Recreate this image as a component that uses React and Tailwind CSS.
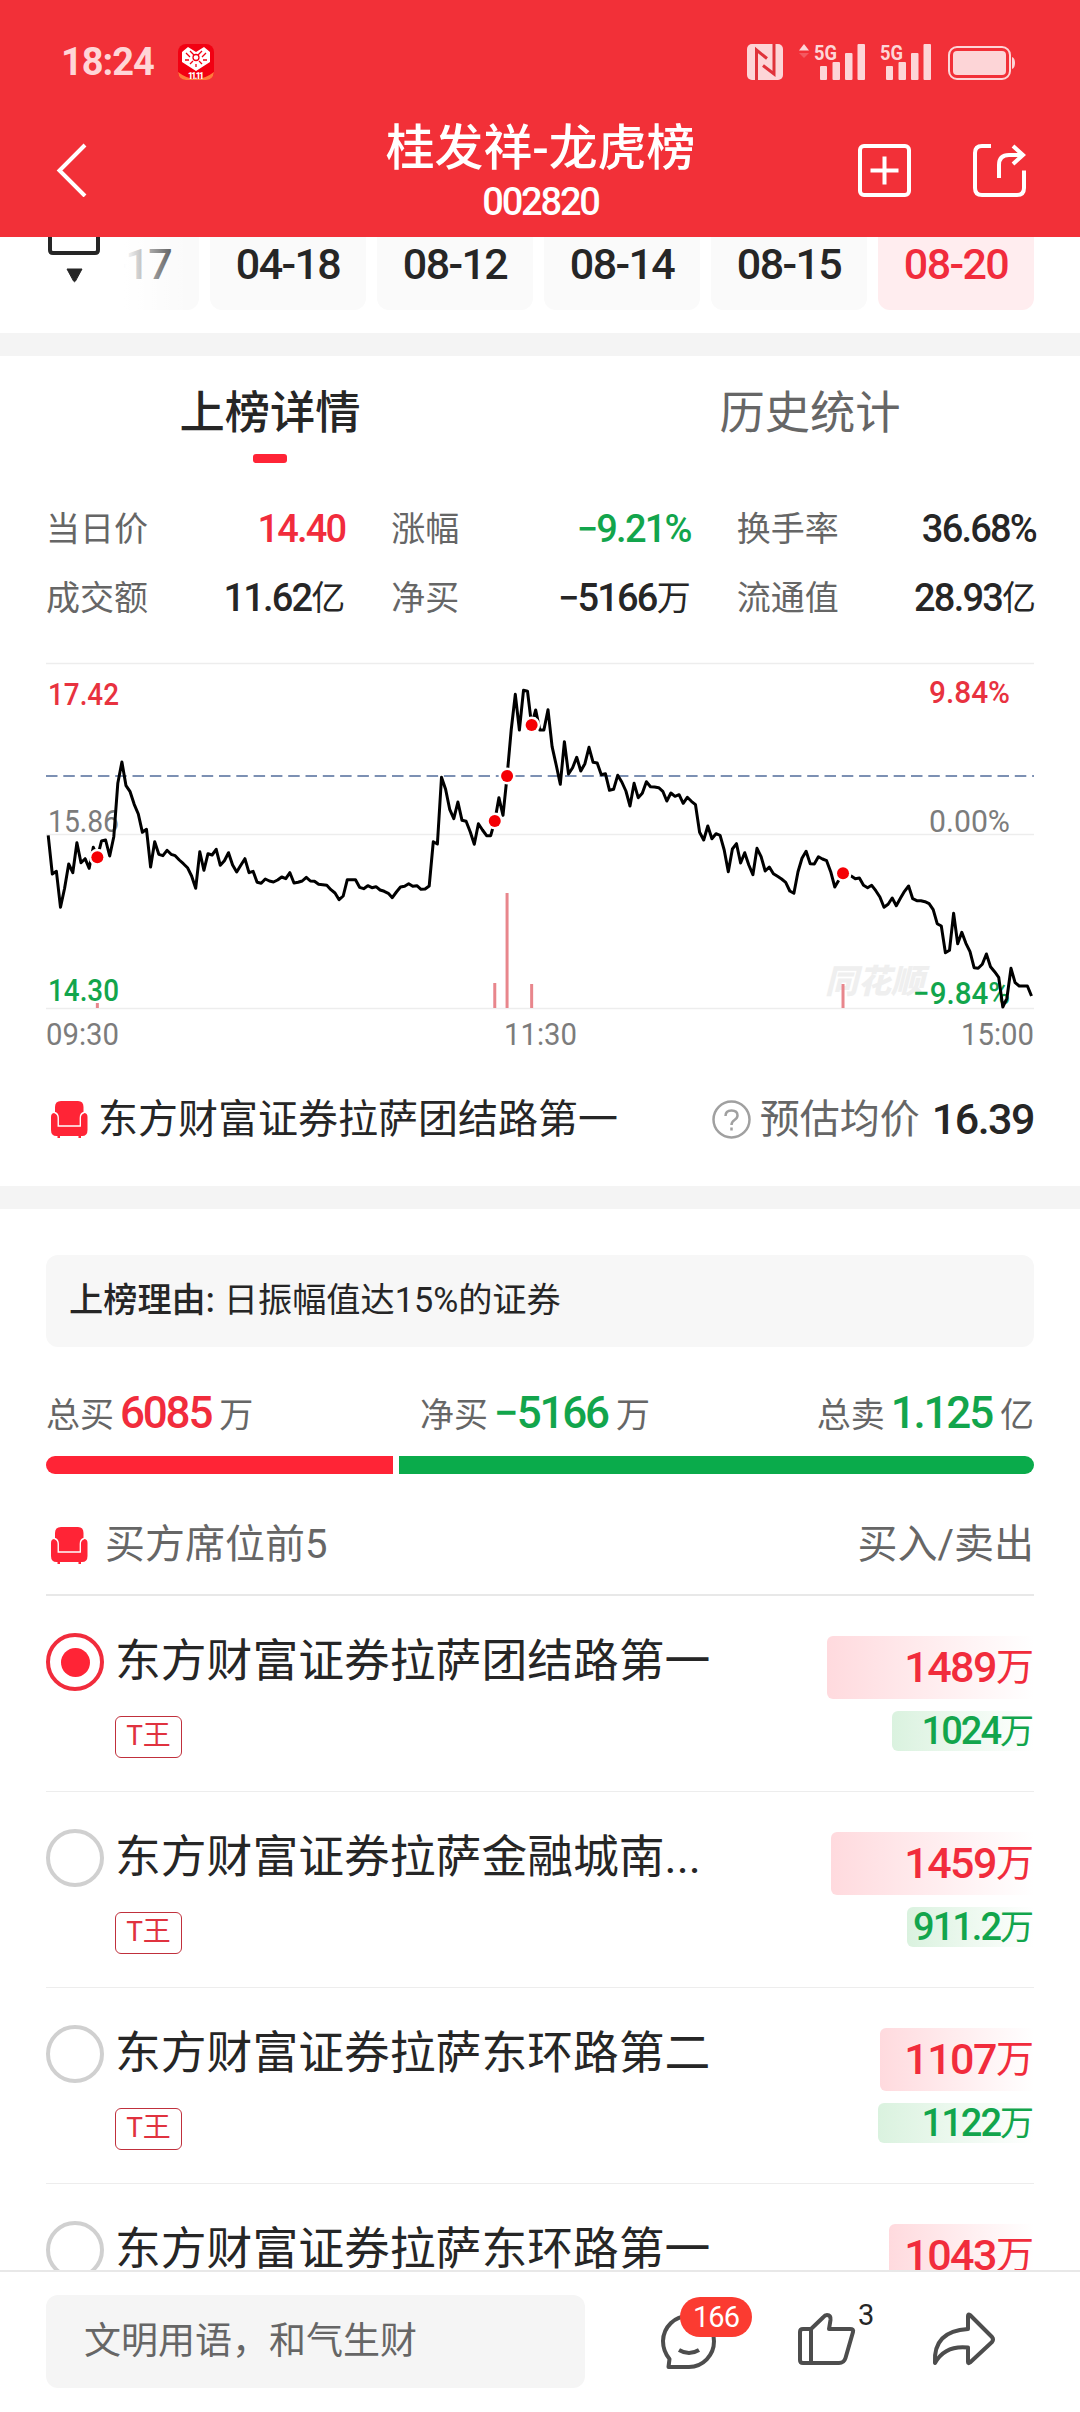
import React from 'react';

const DATES = ['04-18', '08-12', '08-14', '08-15', '08-20'];

const STATS = [
    { label: '当日价', value: '14.40', color: 'text-[#f12c3c]' },
    { label: '涨幅', value: '−9.21%', color: 'text-[#12a54c]' },
    { label: '换手率', value: '36.68%', color: 'text-[#262626]' },
    { label: '成交额', value: '11.62', unit: '亿', color: 'text-[#262626]' },
    { label: '净买', value: '−5166', unit: '万', color: 'text-[#262626]' },
    { label: '流通值', value: '28.93', unit: '亿', color: 'text-[#262626]' },
];

const SEATS = [
    { name: '东方财富证券拉萨团结路第一', buy: '1489', sell: '1024', buyWidth: 207, sellWidth: 142, selected: true },
    { name: '东方财富证券拉萨金融城南...', buy: '1459', sell: '911.2', buyWidth: 203, sellWidth: 127 },
    { name: '东方财富证券拉萨东环路第二', buy: '1107', sell: '1122', buyWidth: 154, sellWidth: 156 },
    { name: '东方财富证券拉萨东环路第一', buy: '1043', buyWidth: 145 },
];

// One sample per trading minute, in thirds of a pixel
const PRICES = [
    556, 672, 664, 772, 715, 642, 668, 578, 638, 626, 655, 592, 622, 573, 570, 618, 560, 400, 336, 407,
    425, 463, 492, 547, 538, 651, 575, 613, 617, 601, 613, 617, 630, 641, 653, 678, 715, 605, 661, 611,
    615, 598, 646, 632, 608, 645, 666, 646, 626, 668, 664, 697, 700, 687, 693, 696, 690, 681, 686, 668,
    699, 697, 693, 682, 693, 694, 703, 704, 706, 719, 729, 749, 738, 689, 689, 689, 712, 716, 707, 713,
    710, 720, 724, 730, 743, 726, 711, 709, 701, 709, 707, 718, 717, 708, 575, 582, 382, 418, 478, 506,
    456, 511, 514, 545, 583, 521, 540, 557, 557, 513, 443, 496, 378, 240, 133, 240, 121, 124, 225, 180,
    240, 240, 179, 290, 345, 403, 275, 372, 353, 322, 363, 341, 292, 337, 339, 374, 371, 421, 418, 376,
    396, 423, 468, 400, 443, 430, 395, 410, 411, 413, 424, 453, 429, 439, 434, 460, 442, 454, 464, 547,
    570, 528, 566, 551, 556, 600, 665, 597, 581, 639, 608, 645, 674, 595, 620, 663, 651, 671, 679, 687,
    697, 723, 730, 665, 625, 604, 641, 642, 620, 627, 632, 665, 711, 690, 670, 672, 678, 686, 684, 706,
    713, 706, 722, 741, 772, 763, 744, 767, 745, 724, 708, 746, 752, 752, 755, 761, 779, 821, 828, 908,
    901, 790, 881, 847, 880, 905, 953, 955, 943, 912, 950, 965, 982, 1071, 1045, 955, 998, 1008, 1008, 1008,
    1038,
];

// Minutes with a large order, and the height of each volume bar
const ORDERS = [
    { minute: 12, height: 5 },
    { minute: 109, height: 25 },
    { minute: 112, height: 115 },
    { minute: 118, height: 24 },
    { minute: 194, height: 24 },
];

const toX = (minute) => 2.2 + minute * 4.097;
const toY = (sample) => (sample - 39) / 3;

const SignalBars = ({ x }) => (
    <g>
        <text x={x - 6} y="15.5" fontSize="20" fontWeight="700" textLength="23" lengthAdjust="spacingAndGlyphs">5G</text>
        <rect x={x} y="22" width="7" height="14" rx="1" />
        <rect x={x + 12.5} y="18" width="7.5" height="18" rx="1" />
        <rect x={x + 25} y="9" width="7.5" height="27" rx="1" />
        <rect x={x + 37.5} y="0" width="7.5" height="36" rx="1" />
    </g>
);

const StatusBar = () => (
    <div className="flex items-center h-[124px] pl-[61px] pr-[65px]">
        <span className="w-[94px] text-[38px] leading-none font-bold tracking-[-1px] text-[#ffd5d7]">18:24</span>
        <svg className="w-9 h-9 ml-[23px]" viewBox="0 0 36 36">
            <rect width="36" height="36" rx="8" fill="#f20012" />
            <path d="M0 28Q18 42 36 28Q35 36 28 36H8Q1 36 0 28Z" fill="#ff7a3c" />
            <path d="M18 27L4 18V8L10 3L18 8L26 3L32 8V18Z" fill="#fff" />
            <path d="M8 9l4 4M12 7l4 4M24 7l-4 4M28 9l-4 4M7 16h4M25 16h4M12 20l3-3M24 20l-3-3M18 20v3" stroke="#f20012" strokeWidth="1.3" />
            <circle cx="18" cy="13.5" r="3" fill="none" stroke="#f20012" strokeWidth="1.3" />
            <text x="10" y="34.5" fontSize="8.5" fontWeight="900" fill="#fff" textLength="16">11.11</text>
        </svg>
        <svg className="w-[268px] h-9 ml-auto overflow-visible" viewBox="0 0 268 36" fill="#fdd5d7">
            <rect width="36" height="36" rx="5" />
            <path d="M9.5 36V6L20 14.500M27 0V30L16 21.500" fill="none" stroke="#e0323a" strokeWidth="3" />
            <path d="M52 6.500L57 0L62 6.500Z" />
            <path d="M52 9L57 14L62 9Z" opacity="0.25" />
            <SignalBars x={73} />
            <SignalBars x={139} />
            <rect x="202" y="3" width="61" height="32" rx="8" fill="none" stroke="#fdd5d7" strokeWidth="2" />
            <rect x="206" y="7" width="53" height="24" rx="4" />
            <path d="M265 13Q268 14 268 19Q268 24 265 25Z" />
        </svg>
    </div>
);

const Header = () => (
    <header className="flex-none h-[237px] bg-[#f23038] text-white">
        <StatusBar />
        <div className="flex items-start justify-between h-[113px] pl-[56px] pr-[55px]">
            <svg className="w-[168px] h-[54px] mt-[19px]" viewBox="0 0 168 54" fill="none" stroke="#fff" strokeWidth="4">
                <path d="M29 2L3.500 27.500L29 53" />
            </svg>
            <div className="flex flex-col items-center">
                <h1 className="text-[48.800px] leading-[50px] font-medium">桂发祥-龙虎榜</h1>
                <p className="text-[38px] leading-[56px] tracking-[-2.200px] font-medium">002820</p>
            </div>
            <svg className="w-[168px] h-[54px] mt-[19px] overflow-visible" viewBox="0 0 168 54" fill="none" stroke="#fff" strokeWidth="4">
                <rect x="3" y="3" width="49" height="49" rx="4" />
                <path d="M13.500 27.500H41.500M27.500 13.500V41.500" />
                <path d="M134 3H125Q118 3 118 10V45Q118 52 125 52H160Q167 52 167 45V27.500" />
                <path d="M142 35V22Q142 12 152 12H166M156 3L166 12L156 21" />
            </svg>
        </div>
    </header>
);

const DateStrip = () => (
    <div className="flex-none h-24 overflow-hidden flex">
        <svg className="flex-none w-[62px] h-12 ml-[43px]" viewBox="0 0 62 48" fill="none">
            <path d="M7 -6V13Q7 16 10 16H52Q55 16 55 13V-6" stroke="#262626" strokeWidth="4" />
            <path d="M24 32H39L32.500 44Q31.500 45.500 30.500 44Z" fill="#262626" stroke="#262626" strokeWidth="1" />
        </svg>
        <div className="flex gap-[11px] -mt-[19px]">
            <div className="relative flex-none w-[94px] h-[92px] pr-7 rounded-r-xl bg-[#fafafa] flex items-center justify-end text-[43px] tracking-[-1.600px] font-medium text-[#262626]">
                -17
                <div className="absolute inset-0 bg-linear-to-r from-white from-20% to-transparent to-90%"></div>
            </div>
            {DATES.map((date, index) => (
                <div
                    key={date}
                    className={`flex-none w-[156px] h-[92px] rounded-xl flex items-center justify-center text-[43px] tracking-[-1.600px] font-medium ${
                        index === DATES.length - 1 ? 'bg-[#ffedef] text-[#f12c3c]' : 'bg-[#fafafa] text-[#262626]'
                    }`}
                >
                    {date}
                </div>
            ))}
        </div>
    </div>
);

const Tabs = () => (
    <div className="flex-none grid grid-cols-2 h-[107px] pt-[30px] text-[45.300px] leading-[56px]">
        <div className="flex flex-col items-center font-medium text-[#262626]">
            上榜详情
            <div className="w-[34px] h-[9px] mt-3 rounded-[3px] bg-[#ff2436]"></div>
        </div>
        <div className="text-center text-[#666]">历史统计</div>
    </div>
);

const Stats = () => (
    <div className="flex-none grid grid-cols-3 gap-x-[46px] h-[200px] px-[46px] pt-8 auto-rows-[69px] w-[1082px]">
        {STATS.map((item) => (
            <div key={item.label} className="flex items-center justify-between">
                <span className="text-[34px] text-[#666]">{item.label}</span>
                <span className={`flex items-center ${item.color}`}>
                    <span className="text-[38px] tracking-[-1.800px] font-medium">{item.value}</span>
                    {item.unit && <span className="text-[34px]">{item.unit}</span>}
                </span>
            </div>
        ))}
    </div>
);

const PriceChart = () => {
    const line = PRICES.map((sample, minute) => `${toX(minute).toFixed(1)},${toY(sample).toFixed(1)}`).join(' ');

    return (
        <div className="flex-none h-[390px] px-[46px]">
            <svg className="w-[988px] h-[390px] overflow-visible" viewBox="0 0 988 390" fontSize="31">
                <path d="M0 .5H988M0 171.500H988M0 345.500H988" stroke="#ededed" strokeWidth="1.500" />
                <text x="779" y="330" fontSize="33" fontWeight="900" fontStyle="italic" fill="#efefef">同花顺</text>

                {/* Axis labels */}
                <g fontWeight="500">
                    <text x="2" y="42" fill="#e8323f" textLength="71" lengthAdjust="spacingAndGlyphs">17.42</text>
                    <text x="2" y="337.500" fill="#12a54c" textLength="71" lengthAdjust="spacingAndGlyphs">14.30</text>
                    <text x="883" y="39.500" fill="#e8323f" textLength="81" lengthAdjust="spacingAndGlyphs">9.84%</text>
                    <text x="867" y="340.500" fill="#12a54c" textLength="97" lengthAdjust="spacingAndGlyphs">−9.84%</text>
                </g>
                <g fill="#7c7c7c">
                    <text x="2" y="169" textLength="71" lengthAdjust="spacingAndGlyphs">15.86</text>
                    <text x="883" y="169" textLength="81" lengthAdjust="spacingAndGlyphs">0.00%</text>
                    <text x="0" y="382" textLength="73" lengthAdjust="spacingAndGlyphs">09:30</text>
                    <text x="458" y="382" textLength="73" lengthAdjust="spacingAndGlyphs">11:30</text>
                    <text x="915" y="382" textLength="73" lengthAdjust="spacingAndGlyphs">15:00</text>
                </g>

                <path d="M0 113H988" stroke="#7c90b3" strokeWidth="1.800" strokeDasharray="11.5 5.8" />
                <polyline points={line} fill="none" stroke="#000" strokeWidth="3" strokeLinejoin="round" />
                {ORDERS.map(({ minute, height }) => (
                    <g key={minute}>
                        <rect x={toX(minute) - 1.5} y={345 - height} width="3" height={height} fill="#e8868c" />
                        <circle cx={toX(minute)} cy={toY(PRICES[minute])} r="8.500" fill="#fff" />
                        <circle cx={toX(minute)} cy={toY(PRICES[minute])} r="6" fill="#f50005" />
                    </g>
                ))}
            </svg>
        </div>
    );
};

const SeatIcon = () => (
    <svg className="flex-none w-[37px] h-[37px]" viewBox="0 0 37 37">
        <path d="M10 0H27Q32.500 0 32.500 6V12Q29 13 29 17V25H7.500V17Q7.500 13 4 12V6Q4 0 10 0Z" fill="#ff2436" />
        <path
            d="M0 16Q0 12 3.500 12Q7 12 7 16V25H29.500V16Q29.500 12 33 12Q36.500 12 36.500 16V29Q36.500 35 31 35H30V37H27.500V35H9V37H6.500V35H5.500Q0 35 0 29Z"
            fill="#ff2436"
        />
        <path d="M3.500 11.500Q7.200 12.500 7.200 17V25H29.300V17Q29.300 12.500 33 11.500" fill="none" stroke="#fff" strokeWidth="1.300" />
    </svg>
);

const SelectedSeat = () => (
    <div className="flex-none flex items-center h-[133px] pl-[51px] pr-[46px] text-[40px]">
        <SeatIcon />
        <span className="ml-[10px] text-[#262626]">东方财富证券拉萨团结路第一</span>
        <svg className="w-[39px] h-[39px] ml-auto" viewBox="0 0 39 39" fill="none" stroke="#a0a0a0" strokeWidth="2.500">
            <circle cx="19.500" cy="19.500" r="18" />
            <path d="M13.500 16Q13.500 10.500 19.500 10.500Q25.500 10.500 25.500 15.500Q25.500 18 22.500 20Q19.500 22 19.500 25M19.500 27.500V30.500" />
        </svg>
        <span className="ml-[9px] text-[#666]">预估均价</span>
        <span className="ml-3 text-[43px] tracking-[-1.500px] font-medium text-[#262626]">16.39</span>
    </div>
);

const Divider = () => <div className="flex-none h-[23px] bg-[#f4f4f4]"></div>;

const Total = ({ label, value, unit, color }) => (
    <div className="flex items-center text-[34px] text-[#666]">
        {label}
        <span className={`ml-1.5 mr-2 pb-1 text-[44px] leading-none tracking-[-2.200px] font-medium ${color}`}>{value}</span>
        {unit}
    </div>
);

const Summary = () => (
    <div className="flex-none px-[46px]">
        <div className="flex items-center h-[92px] mt-[46px] pl-[23px] rounded-xl bg-[#f7f7f7] text-[34.200px] text-[#262626]">
            <span className="font-medium">上榜理由:</span>
            <span className="ml-[9px]">日振幅值达15%的证券</span>
        </div>
        <div className="flex items-center justify-between h-[50px] mt-[43px]">
            <Total label="总买" value="6085" unit="万" color="text-[#f12c3c]" />
            <Total label="净买" value="−5166" unit="万" color="text-[#12a54c]" />
            <Total label="总卖" value="1.125" unit="亿" color="text-[#12a54c]" />
        </div>
        <div className="flex gap-1.5 h-[18px] mt-4">
            <div className="w-[347px] rounded-l-full bg-[#ff2436]"></div>
            <div className="flex-1 rounded-r-full bg-[#0aab4b]"></div>
        </div>
    </div>
);

const SeatRow = ({ seat }) => (
    <div className="flex-none flex h-[196px] border-b border-[#ededed]">
        <div
            className={`flex-none w-[58px] h-[58px] mt-[37px] rounded-full border-4 flex items-center justify-center ${
                seat.selected ? 'border-[#f12c3c]' : 'border-[#d0d0d0]'
            }`}
        >
            {seat.selected && <div className="w-[29px] h-[29px] rounded-full bg-[#ff2436]"></div>}
        </div>
        <div className="ml-[11px] pt-9 flex flex-col items-start">
            <span className="text-[45.800px] leading-[60px] text-[#262626] whitespace-nowrap">{seat.name}</span>
            <span className="mt-6 w-[67px] h-[42px] text-center rounded-[6px] border border-[#c0303c] text-[28px] leading-[37px] text-[#e0323f]">
                T王
            </span>
        </div>
        <div className="ml-auto pt-10 flex flex-col items-end">
            <div
                className="flex items-center justify-end h-[63px] rounded-l-[6px] bg-linear-to-r from-[#ffdade] to-white text-[#f12c3c] whitespace-nowrap"
                style={{ width: seat.buyWidth }}
            >
                <span className="text-[43px] tracking-[-1.500px] font-medium">{seat.buy}</span>
                <span className="text-[38px]">万</span>
            </div>
            {seat.sell && (
                <div
                    className="flex items-center justify-end h-10 mt-3 rounded-l-[6px] bg-linear-to-r from-[#daf2df] to-white text-[#12a54c] whitespace-nowrap"
                    style={{ width: seat.sellWidth }}
                >
                    <span className="text-[38px] tracking-[-2px] font-medium">{seat.sell}</span>
                    <span className="text-[34px]">万</span>
                </div>
            )}
        </div>
    </div>
);

const SeatList = () => (
    <div className="flex-1 min-h-0 overflow-hidden px-[46px]">
        <div className="flex items-center h-[122px] border-b-2 border-[#e8e8e8] pt-[22px] pl-[5px] text-[40px] text-[#666]">
            <SeatIcon />
            <span className="ml-[17px]">买方席位前5</span>
            <span className="ml-auto">买入/卖出</span>
        </div>
        {SEATS.map((seat) => (
            <SeatRow key={seat.name} seat={seat} />
        ))}
    </div>
);

const CommentBar = () => (
    <footer className="flex-none flex h-[142px] pt-[23px] px-[46px] border-t-2 border-[#e8e8e8]">
        <div className="w-[539px] h-[93px] pl-[38px] rounded-xl bg-[#f5f5f5] flex items-center text-[37px] text-[#666]">
            文明用语，和气生财
        </div>
        <div className="relative ml-[73px] mt-[17px]">
            <svg className="w-[60px] h-[60px]" viewBox="0 0 60 60" fill="none" stroke="#4d4d4d" strokeWidth="4">
                <path d="M11.500 47Q5 39 5 29A25.500 25.500 0 1 1 31 55H10.500Z" strokeLinejoin="round" />
                <path d="M21 38Q31 44 41 38" />
            </svg>
            <span className="absolute left-[22px] -top-[15px] w-[72px] h-10 rounded-full bg-[#fb3b31] text-center text-[29px] leading-10 tracking-[-1px] text-white">
                166
            </span>
        </div>
        <div className="flex ml-[78px]">
            <svg className="w-[60px] h-[60px] mt-4" viewBox="0 0 60 60" fill="none" stroke="#4d4d4d" strokeWidth="4" strokeLinejoin="round">
                <path d="M15 18H7Q4 18 4 21V49Q4 52 7 52H43Q48 52 49.500 47L57 21Q58 18 54 18H33L34.500 9Q35 4 31 4Q29 4 27 6.500L15 18V52" />
            </svg>
            <span className="w-[19px] pl-0.5 pt-0.5 text-[29px] leading-[36px] text-[#262626]">3</span>
        </div>
        <svg className="w-[66px] h-[60px] ml-[56px] mt-4" viewBox="0 0 66 60" fill="none" stroke="#4d4d4d" strokeWidth="4" strokeLinejoin="round">
            <path d="M37 5Q37 2.500 39 4L61 26Q63 28.500 61 31L39 51.500Q37 53 37 51V36.500Q14 34 4 52Q2 20 37 18Z" />
        </svg>
    </footer>
);

const App = () => {
    return (
        <div className="w-[1080px] h-[2412px] overflow-hidden flex flex-col bg-white font-['Roboto','Noto_Sans_CJK_SC',sans-serif]">
            <Header />
            <DateStrip />
            <Divider />
            <Tabs />
            <Stats />
            <PriceChart />
            <SelectedSeat />
            <Divider />
            <Summary />
            <SeatList />
            <CommentBar />
        </div>
    );
};

export default App;
